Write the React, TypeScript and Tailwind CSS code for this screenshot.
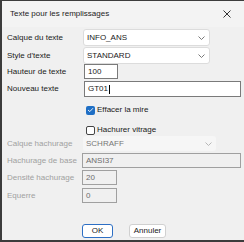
import React from "react";

const Chevron = ({ color = "#6b6b6b" }: { color?: string }) => (
  <svg width="7" height="4" viewBox="0 0 7 4" fill="none">
    <path d="M0.5 0.5 L3.5 3.5 L6.5 0.5" stroke={color} strokeWidth="0.9" />
  </svg>
);

export default function App() {
  const font = { fontFamily: '"Liberation Sans", Arial, sans-serif' };
  return (
    <div
      className="w-[244px] h-[242px] bg-[#f0f0f0] border-l-2 border-t border-b-2 border-[#3c3c3c] text-[8px] leading-none text-[#1a1a1a] flex flex-col overflow-hidden whitespace-nowrap"
      style={font}
    >
      {/* title bar */}
      <div className="h-[26px] bg-[#f3f3f3] flex items-center justify-between pl-[8px] pr-[13px] shrink-0">
        <span className="text-[8px] text-[#222]">Texte pour les remplissages</span>
        <svg width="8" height="8" viewBox="0 0 8 8">
          <path d="M0.5 0.5 L7.5 7.5 M7.5 0.5 L0.5 7.5" stroke="#333" strokeWidth="1" />
        </svg>
      </div>

      <div className="flex flex-col pl-[5px]">
        {/* row 1 */}
        <div className="flex items-center h-[17px] mt-[2px]">
          <span className="w-[76px]">Calque du texte</span>
          <div className="w-[127px] h-[17px] bg-white border border-[#dcdcdc] rounded-[3px] flex items-center justify-between pl-[3px] pr-[4px]">
            <span>INFO_ANS</span>
            <Chevron />
          </div>
        </div>
        {/* row 2 */}
        <div className="flex items-center h-[17px] mt-[1px]">
          <span className="w-[76px]">Style d'texte</span>
          <div className="w-[127px] h-[17px] bg-white border border-[#dcdcdc] rounded-[3px] flex items-center justify-between pl-[3px] pr-[4px]">
            <span>STANDARD</span>
            <Chevron />
          </div>
        </div>
        {/* row 3 */}
        <div className="flex items-center h-[15px] mt-[0px]">
          <span className="w-[77px]">Hauteur de texte</span>
          <div className="w-[34px] h-[15px] bg-white border border-[#7a7a7a] flex items-center pl-[3px]">
            100
          </div>
        </div>
        {/* row 4 */}
        <div className="flex items-center h-[16px] mt-[2px]">
          <span className="w-[77px]">Nouveau texte</span>
          <div className="w-[157px] h-[16px] bg-white border border-[#7a7a7a] flex items-center pl-[3px]">
            GT01<span className="w-px h-[9px] bg-black ml-px" />
          </div>
        </div>
        {/* checkbox 1 */}
        <div className="flex items-center h-[10px] mt-[8px] pl-[79px]">
          <div className="w-[9px] h-[9px] rounded-[2px] bg-[#1f6fc5] flex items-center justify-center">
            <svg width="7" height="6" viewBox="0 0 7 6">
              <path d="M1 3 L2.8 4.6 L6 1.2" stroke="white" strokeWidth="0.9" fill="none" />
            </svg>
          </div>
          <span className="ml-[2px]">Effacer la mire</span>
        </div>
        {/* checkbox 2 */}
        <div className="flex items-center h-[10px] mt-[10px] pl-[79px]">
          <div className="w-[9px] h-[9px] rounded-[2px] border border-[#444] bg-white" />
          <span className="ml-[2px]">Hachurer vitrage</span>
        </div>
        {/* disabled combo */}
        <div className="flex items-center h-[15px] mt-[1px] text-[#a0a0a0]">
          <span className="w-[76px]">Calque hachurage</span>
          <div className="w-[133px] h-[15px] bg-[#f6f6f6] rounded-[3px] flex items-center justify-between pl-[3px] pr-[4px]">
            <span className="text-[#777]">SCHRAFF</span>
            <Chevron color="#b0b0b0" />
          </div>
        </div>
        {/* disabled inputs */}
        <div className="flex items-center h-[15px] mt-[2px] text-[#a0a0a0]">
          <span className="w-[75px]">Hachurage de base</span>
          <div className="w-[159px] h-[15px] border border-[#a0a0a0] flex items-center pl-[3px] text-[#6d6d6d]">
            ANSI37
          </div>
        </div>
        <div className="flex items-center h-[15px] mt-[2px] text-[#a0a0a0]">
          <span className="w-[75px]">Densité hachurage</span>
          <div className="w-[35px] h-[15px] border border-[#a0a0a0] flex items-center pl-[3px] text-[#6d6d6d]">
            20
          </div>
        </div>
        <div className="flex items-center h-[15px] mt-[3px] text-[#a0a0a0]">
          <span className="w-[75px]">Equerre</span>
          <div className="w-[35px] h-[15px] border border-[#a0a0a0] flex items-center pl-[3px] text-[#6d6d6d]">
            0
          </div>
        </div>
        {/* buttons */}
        <div className="flex items-center h-[14px] mt-[21px] pl-[75px] gap-[16px]">
          <div className="w-[31px] h-[14px] bg-white border border-[#2d6fc4] rounded-[3px] flex items-center justify-center">
            OK
          </div>
          <div className="w-[37px] h-[14px] bg-white border border-[#d0d0d0] rounded-[3px] flex items-center justify-center">
            Annuler
          </div>
        </div>
      </div>
    </div>
  );
}
